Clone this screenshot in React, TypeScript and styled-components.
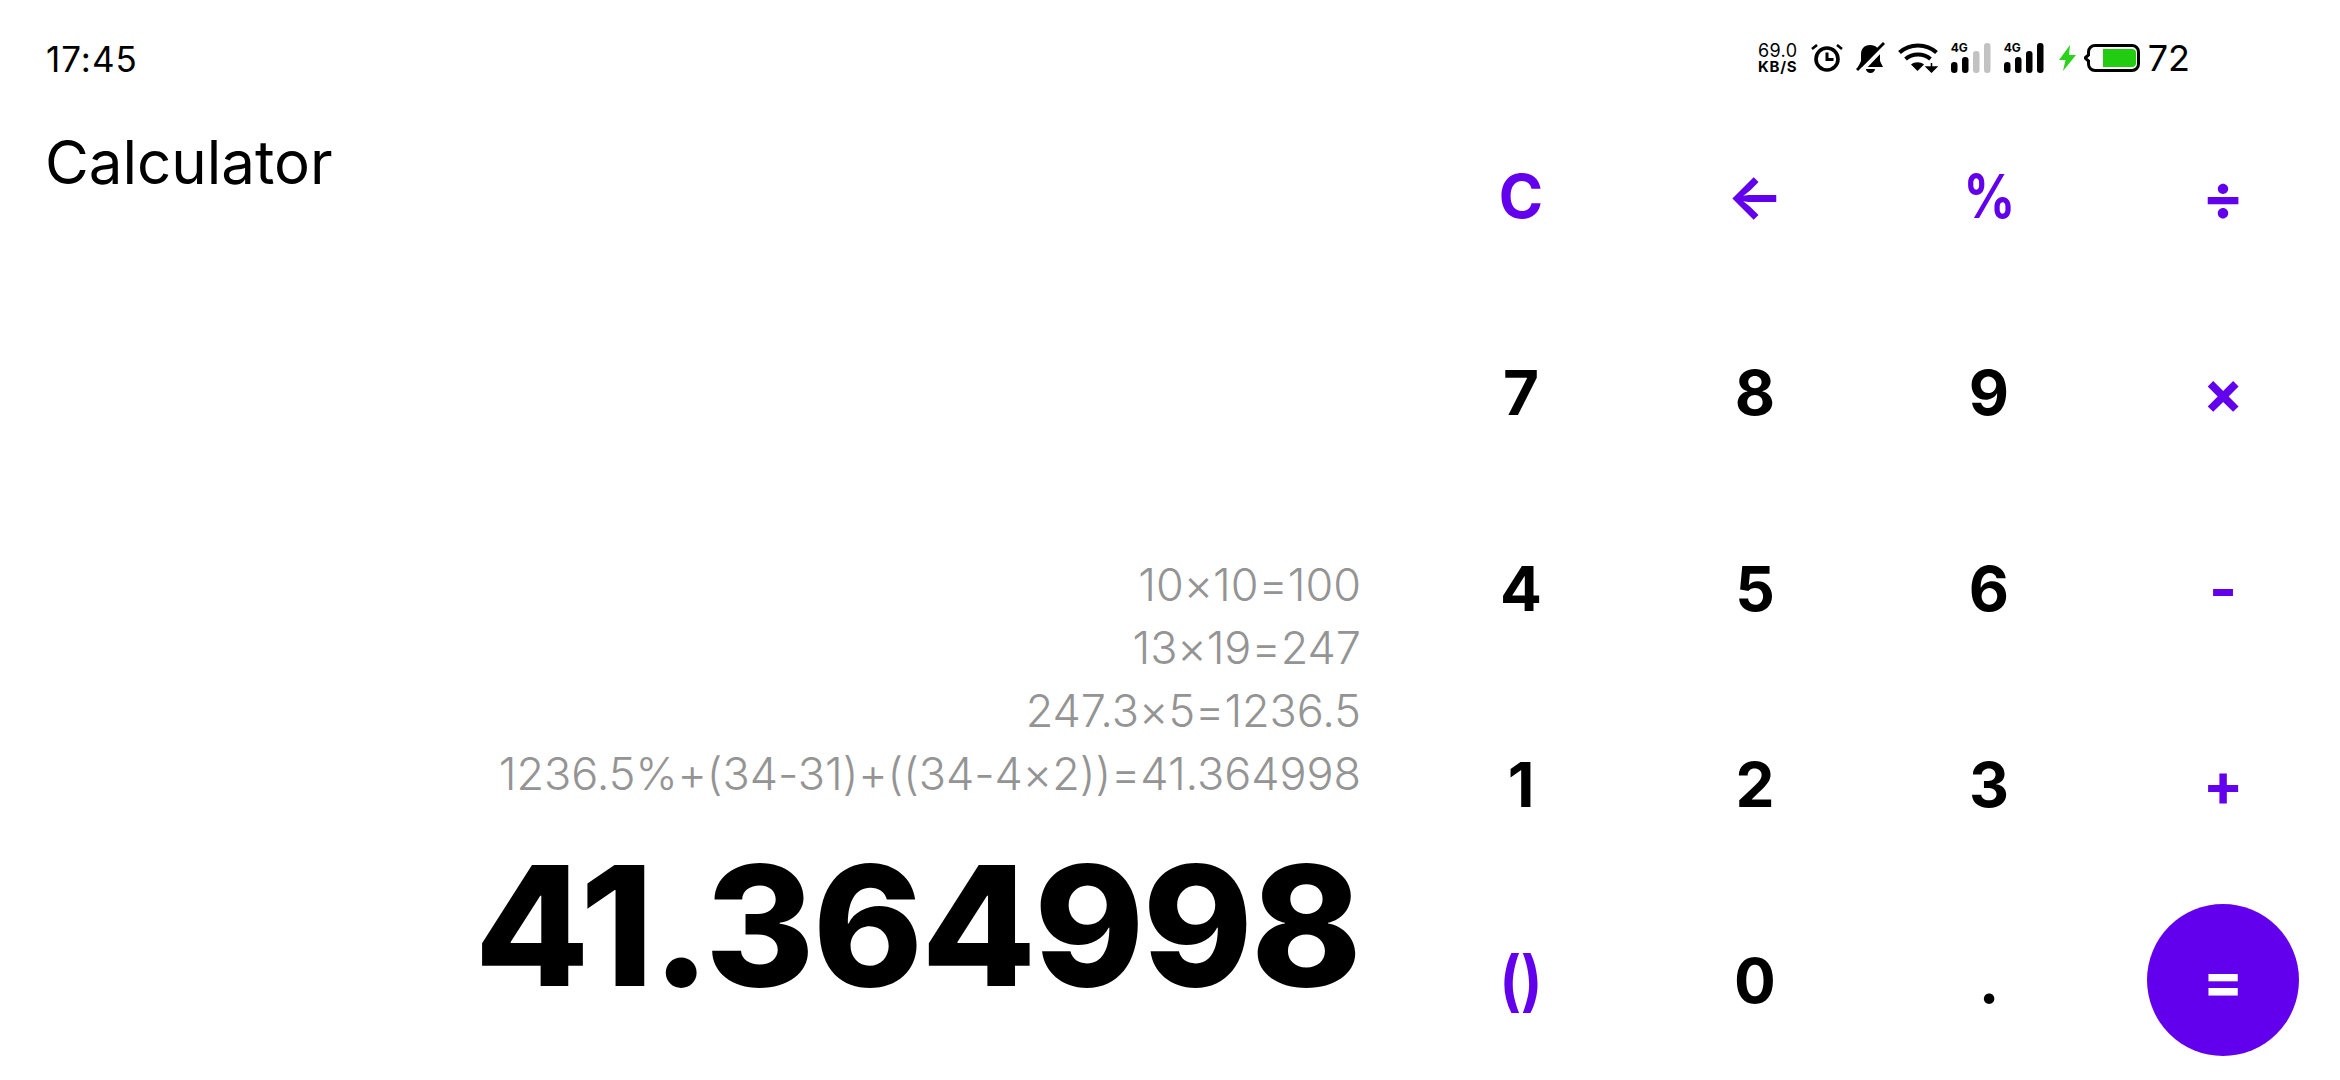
import styled, { createGlobalStyle } from 'styled-components';

const PURPLE = '#6200ee';

const GlobalStyle = createGlobalStyle`
  html, body {
    margin: 0;
    padding: 0;
    background: #fff;
    font-family: 'Inter', 'Liberation Sans', sans-serif;
  }
`;

const keys = [
  { label: 'C', accent: true, size: 60 },
  { label: '←', accent: true, size: 60 },
  { label: '%', accent: true, size: 60, narrow: true },
  { label: '÷', accent: true, size: 62 },
  { label: '7' },
  { label: '8' },
  { label: '9' },
  { label: '×', accent: true, size: 60 },
  { label: '4' },
  { label: '5' },
  { label: '6' },
  { label: '-', accent: true, size: 60 },
  { label: '1' },
  { label: '2' },
  { label: '3' },
  { label: '+', accent: true, size: 60 },
  { label: '()', accent: true, narrow: true, size: 66 },
  { label: '0' },
  { label: '.' },
];

const history = ['10×10=100', '13×19=247', '247.3×5=1236.5', '1236.5%+(34-31)+((34-4×2))=41.364998'];

function SignalIcon({ weak }: { weak?: boolean }) {
  const tail = weak ? '#c2c2c2' : '#000';
  return (
    <svg width="40" height="30" viewBox="0 0 40 30">
      <rect x="0" y="19" width="6.500" height="11" rx="3.200" fill="#000" />
      <rect x="11" y="14" width="6.500" height="16" rx="3" fill="#000" />
      <rect x="22" y="8" width="6.500" height="22" rx="3" fill={tail} />
      <rect x="33" y="0" width="6.500" height="30" rx="3" fill={tail} />
    </svg>
  );
}

export default function App() {
  return (
    <Screen>
      <GlobalStyle />
      <StatusBar>
        <Clock>17:45</Clock>
        <StatusIcons>
          <Speed>
            <SpeedValue>69.0</SpeedValue>
            <SpeedUnit>KB/S</SpeedUnit>
          </Speed>
          <svg width="32" height="29" viewBox="0 0 32 29" fill="none" stroke="#000">
            <circle cx="16" cy="15" r="11" strokeWidth="3.600" />
            <path d="M16 8.500v7h6.500" strokeWidth="3" />
            <path d="M1 5 6 1M31 5 26 1" strokeWidth="2.600" />
          </svg>
          <svg width="29" height="32" viewBox="0 0 29 32">
            <path d="M14 3C8 3 5 7 5 12v7l-3 6h25l-3-6v-7C24 7 20 3 14 3z" fill="#000" />
            <path d="M10 27h9a4.500 4 0 0 1-9 0z" fill="#000" />
            <path d="M30 3 5 29" stroke="#fff" strokeWidth="4" />
            <path d="M28 1 1 28" stroke="#000" strokeWidth="2.800" />
          </svg>
          <svg width="40" height="30" viewBox="0 0 40 30" fill="none">
            <path d="M1.500 9.500c10-9.500 27-9.500 37 0" stroke="#000" strokeWidth="4" />
            <path d="M7.500 16c7-6 18-6 25 0" stroke="#000" strokeWidth="4" />
            <path d="M13 21.500 19.500 28 26 21.500c-3.500-3-9.500-3-13 0z" fill="#000" />
            <path d="M33.500 20v5M28.500 24h10l-5 5z" stroke="#000" strokeWidth="1.500" fill="#000" />
          </svg>
          <NetworkCell>
            <NetworkLabel>4G</NetworkLabel>
            <SignalIcon weak />
          </NetworkCell>
          <NetworkCell>
            <NetworkLabel>4G</NetworkLabel>
            <SignalIcon />
          </NetworkCell>
          <BatteryGroup>
            <svg width="17" height="26" viewBox="0 0 17 26">
              <path d="M11 0 0 15h6.500L4 26 17 10h-7z" fill="#2bd11b" />
            </svg>
            <svg width="56" height="28" viewBox="0 0 56 28" fill="none">
              <path d="M1 14 4.500 11V8a6.500 6.500 0 0 1 6.500-6.500h37a6.500 6.500 0 0 1 6.500 6.500v12a6.500 6.500 0 0 1-6.500 6.500H11A6.500 6.500 0 0 1 4.500 20v-3z" stroke="#000" strokeWidth="3" />
              <path d="M19 5h29a4 4 0 0 1 4 4v10a4 4 0 0 1-4 4H19z" fill="#22cc11" />
            </svg>
            <BatteryLevel>72</BatteryLevel>
          </BatteryGroup>
        </StatusIcons>
      </StatusBar>
      <Main>
        <Display>
          <Title>Calculator</Title>
          <Results>
            <History>
              {history.map((line) => (
                <HistoryLine key={line}>{line}</HistoryLine>
              ))}
            </History>
            <Total>41.364998</Total>
          </Results>
        </Display>
        <Keypad>
          {keys.map((key) => (
            <Key key={key.label} $accent={key.accent} $size={key.size}>
              <KeyLabel $narrow={key.narrow}>{key.label}</KeyLabel>
            </Key>
          ))}
          <Key $accent>
            <EqualsButton>=</EqualsButton>
          </Key>
        </Keypad>
      </Main>
    </Screen>
  );
}

const Screen = styled.div`
  width: 2340px;
  height: 1080px;
  display: flex;
  flex-direction: column;
  overflow: hidden;
  background: #fff;
  color: #000;
`;

const StatusBar = styled.div`
  height: 98px;
  box-sizing: border-box;
  padding: 20px 150px 0 46px;
  display: flex;
  align-items: center;
  justify-content: space-between;
`;

const Clock = styled.div`
  font-size: 35px;
  font-weight: 400;
  letter-spacing: 1px;
`;

const StatusIcons = styled.div`
  display: flex;
  align-items: center;
  gap: 13px;
  margin-top: -2px;
`;

const Speed = styled.div`
  display: flex;
  flex-direction: column;
  align-items: center;
  width: 40px;
`;

const SpeedValue = styled.span`
  font-size: 18px;
  font-weight: 400;
  line-height: 17px;
  letter-spacing: 0.4px;
`;

const SpeedUnit = styled.span`
  font-size: 15px;
  font-weight: 700;
  line-height: 15px;
  letter-spacing: 0.8px;
`;

const NetworkCell = styled.div`
  position: relative;
  display: flex;
`;

const NetworkLabel = styled.span`
  position: absolute;
  left: 0;
  top: -1px;
  font-size: 12px;
  line-height: 12px;
  font-weight: 700;
`;

const BatteryGroup = styled.div`
  display: flex;
  align-items: center;
  gap: 8px;
  margin-left: 2px;
`;

const BatteryLevel = styled.span`
  font-size: 36px;
  font-weight: 400;
`;

const Main = styled.div`
  flex: 1;
  display: flex;
  min-height: 0;
`;

const Display = styled.div`
  flex: 1;
  box-sizing: border-box;
  padding: 29px 43px 65px 45px;
  display: flex;
  flex-direction: column;
  justify-content: space-between;
`;

const Title = styled.div`
  font-size: 60px;
  font-weight: 400;
  line-height: 70px;
`;

const Results = styled.div`
  display: flex;
  flex-direction: column;
  align-items: flex-end;
`;

const History = styled.div`
  display: flex;
  flex-direction: column;
  align-items: flex-end;
  margin-bottom: 30px;
`;

const HistoryLine = styled.div`
  font-size: 45px;
  font-weight: 300;
  line-height: 63px;
  letter-spacing: -0.05px;
  color: #949494;
`;

const Total = styled.div`
  font-size: 167px;
  font-weight: 800;
  line-height: 180px;
  letter-spacing: -2px;
  margin-right: 1px;
`;

const Keypad = styled.div`
  width: 936px;
  display: grid;
  grid-template-columns: repeat(4, 234px);
  grid-auto-rows: 196px;
`;

const Key = styled.div<{ $accent?: boolean; $size?: number }>`
  display: flex;
  align-items: center;
  justify-content: center;
  font-size: ${(p) => p.$size ?? 62}px;
  font-weight: 700;
  color: ${(p) => (p.$accent ? PURPLE : '#000')};
`;

const KeyLabel = styled.span<{ $narrow?: boolean }>`
  display: inline-block;
  transform: ${(p) => (p.$narrow ? 'scaleX(0.85)' : 'none')};
`;

const EqualsButton = styled.div`
  width: 152px;
  height: 152px;
  border-radius: 50%;
  background: ${PURPLE};
  color: #fff;
  display: flex;
  align-items: center;
  justify-content: center;
  font-size: 60px;
  font-weight: 700;
`;
